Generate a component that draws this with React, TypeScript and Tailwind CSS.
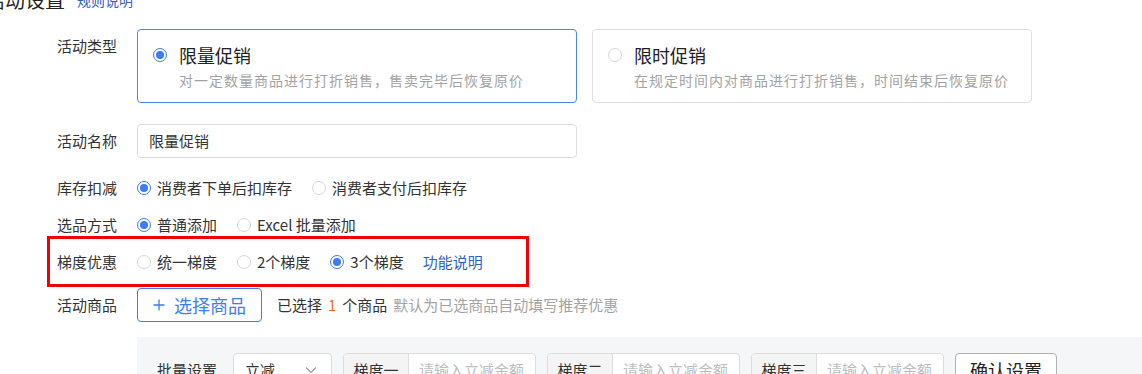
import React from "react";

const font = { fontFamily: '"Noto Sans CJK SC", "Noto Sans", sans-serif' };

function Radio({ checked }: { checked?: boolean }) {
  return checked ? (
    <span className="flex h-[14px] w-[14px] shrink-0 items-center justify-center rounded-full border border-[#3d7cf6] bg-white">
      <span className="h-[8px] w-[8px] rounded-full bg-[#3d7cf6]" />
    </span>
  ) : (
    <span className="h-[14px] w-[14px] shrink-0 rounded-full border border-[#d6d6d6] bg-white" />
  );
}

function RadioItem({ label, checked }: { label: string; checked?: boolean }) {
  return (
    <div className="flex items-center gap-[6px]">
      <Radio checked={checked} />
      <span className="text-[15px] leading-[20px] text-[#333]">{label}</span>
    </div>
  );
}

function Label({ children }: { children: React.ReactNode }) {
  return (
    <div className="w-[80px] shrink-0 text-[15px] leading-[20px] text-[#333]">
      {children}
    </div>
  );
}

function TypeCard({
  title,
  desc,
  active,
}: {
  title: string;
  desc: string;
  active?: boolean;
}) {
  return (
    <div
      className={`h-[74px] w-[440px] rounded-[4px] border bg-white pl-[15px] pt-[13px] ${
        active ? "border-[#4a86f6]" : "border-[#dedede]"
      }`}
    >
      <div className="flex items-center gap-[12px]">
        <Radio checked={active} />
        <span className="text-[18px] leading-[24px] text-[#222]">{title}</span>
      </div>
      <div className="mt-[3px] pl-[26px] text-[14px] leading-[20px] tracking-[1px] text-[#a3a3a3]">
        {desc}
      </div>
    </div>
  );
}

function StepInput({ name }: { name: string }) {
  return (
    <div className="flex h-[34px] overflow-hidden rounded-[4px] border border-[#dcdcdc] bg-white">
      <div className="flex w-[65px] items-center justify-center border-r border-[#dcdcdc] bg-[#f4f4f4] text-[15px] text-[#333]">
        {name}
      </div>
      <div className="flex w-[126px] items-center pl-[10px] text-[15px] text-[#bdbdbd]">
        请输入立减金额
      </div>
    </div>
  );
}

export default function App() {
  return (
    <div
      className="h-[374px] w-[1142px] overflow-hidden bg-white"
      style={font}
    >
      <div className="-mt-[12px] ml-[-15px] flex items-center gap-[12px]">
        <span className="text-[20px] leading-[24px] text-[#222]">活动设置</span>
        <span className="text-[14px] leading-[20px] text-[#3060cc]">
          规则说明
        </span>
      </div>

      <div className="pl-[57px]">
        <div className="mt-[17px] flex">
          <div className="pt-[7px]">
            <Label>活动类型</Label>
          </div>
          <div className="flex gap-[15px]">
            <TypeCard
              active
              title="限量促销"
              desc="对一定数量商品进行打折销售，售卖完毕后恢复原价"
            />
            <TypeCard
              title="限时促销"
              desc="在规定时间内对商品进行打折销售，时间结束后恢复原价"
            />
          </div>
        </div>

        <div className="mt-[21px] flex items-center">
          <Label>活动名称</Label>
          <div className="flex h-[34px] w-[440px] items-center rounded-[4px] border border-[#dcdcdc] pl-[11px] text-[15px] text-[#333]">
            限量促销
          </div>
        </div>

        <div className="mt-[20px] flex items-center">
          <Label>库存扣减</Label>
          <div className="flex gap-[20px]">
            <RadioItem checked label="消费者下单后扣库存" />
            <RadioItem label="消费者支付后扣库存" />
          </div>
        </div>

        <div className="mt-[17px] flex items-center">
          <Label>选品方式</Label>
          <div className="flex gap-[20px]">
            <RadioItem checked label="普通添加" />
            <RadioItem label="Excel 批量添加" />
          </div>
        </div>

        <div className="-ml-[10px] mt-[1px] flex h-[51px] w-[482px] items-center border-[3px] border-[#f00000] pl-[7px]">
          <Label>梯度优惠</Label>
          <div className="flex items-center gap-[20px]">
            <RadioItem label="统一梯度" />
            <RadioItem label="2个梯度" />
            <RadioItem checked label="3个梯度" />
            <span className="-ml-[1px] text-[15px] leading-[20px] text-[#2d5fca]">
              功能说明
            </span>
          </div>
        </div>

        <div className="mt-[1px] flex items-center">
          <Label>活动商品</Label>
          <button className="flex h-[34px] w-[125px] items-center justify-center gap-[9px] rounded-[4px] border border-[#3d7cf6] bg-white text-[18px] text-[#3d7cf6]">
            <svg width="12" height="12" viewBox="0 0 12 12" fill="none">
              <path
                d="M6 0.5V11.5M0.5 6H11.5"
                stroke="#3d7cf6"
                strokeWidth="1.3"
              />
            </svg>
            <span>选择商品</span>
          </button>
          <div className="ml-[15px] flex items-center text-[15px] leading-[20px]">
            <span className="text-[#333]">已选择</span>
            <span className="mx-[6px] text-[#ff6a1a]">1</span>
            <span className="text-[#333]">个商品</span>
            <span className="ml-[6px] text-[#a3a3a3]">
              默认为已选商品自动填写推荐优惠
            </span>
          </div>
        </div>

        <div className="ml-[80px] mt-[15px] h-[60px] bg-[#f5f6f8] pl-[20px] pt-[16px]">
          <div className="flex items-center gap-[11px]">
            <div className="mr-[5px] w-[60px] text-[15px] text-[#333]">
              批量设置
            </div>
            <div className="flex h-[34px] w-[99px] items-center justify-between rounded-[4px] border border-[#dcdcdc] bg-white pl-[11px] pr-[14px] text-[15px] text-[#333]">
              <span>立减</span>
              <svg width="12" height="8" viewBox="0 0 12 8" fill="none">
                <path d="M1 1.5L6 6.5L11 1.5" stroke="#999" strokeWidth="1.2" />
              </svg>
            </div>
            <StepInput name="梯度一" />
            <StepInput name="梯度二" />
            <StepInput name="梯度三" />
            <button className="h-[34px] w-[102px] rounded-[4px] border border-[#b0b0b0] bg-white text-[18px] text-[#222]">
              确认设置
            </button>
          </div>
        </div>
      </div>
    </div>
  );
}
